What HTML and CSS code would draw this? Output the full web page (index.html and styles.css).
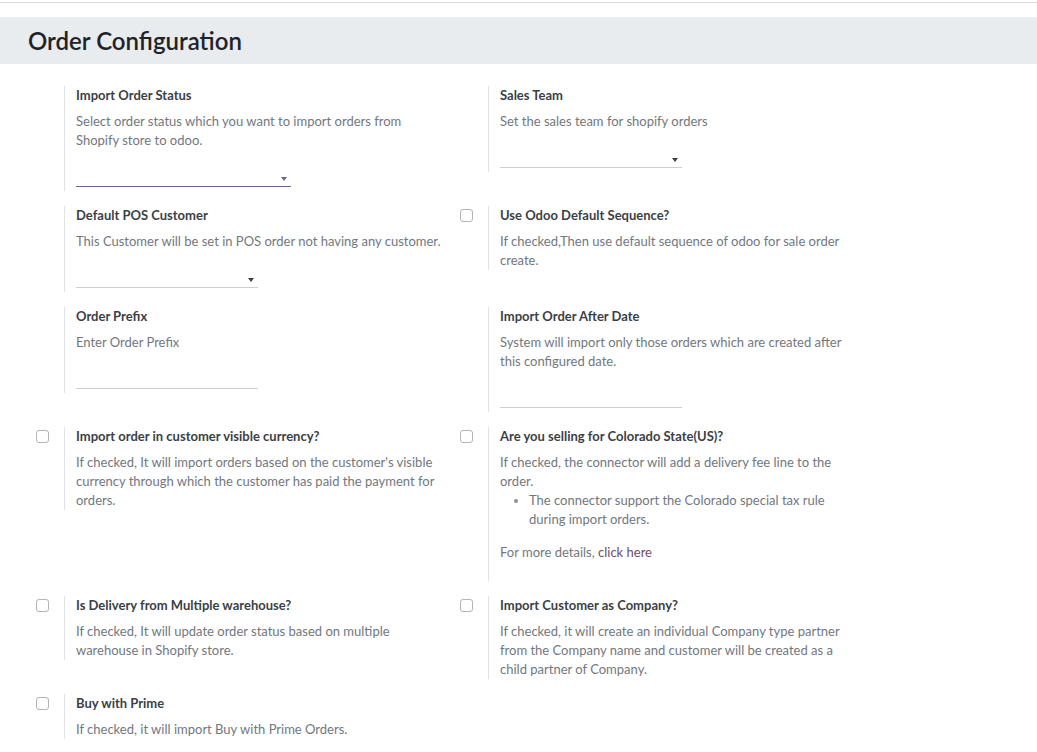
FILE: index.html
```html
<!DOCTYPE html>
<html lang="en">
<head>
<meta charset="utf-8">
<title>Order Configuration</title>
<link rel="stylesheet" href="styles.css">
</head>
<body>
<div class="topline"></div>
<h2 class="section-title">Order Configuration</h2>
<div class="settings">

  <div class="setting">
    <div class="left-pane"></div>
    <div class="right-pane">
      <div class="label">Import Order Status</div>
      <div class="desc">Select order status which you want to import orders from Shopify store to odoo.</div>
      <div class="field select focused wide"><span class="arrow"></span></div>
    </div>
  </div>

  <div class="setting">
    <div class="left-pane"></div>
    <div class="right-pane">
      <div class="label">Sales Team</div>
      <div class="desc">Set the sales team for shopify orders</div>
      <div class="field select"><span class="arrow"></span></div>
    </div>
  </div>

  <div class="setting">
    <div class="left-pane"></div>
    <div class="right-pane">
      <div class="label">Default POS Customer</div>
      <div class="desc">This Customer will be set in POS order not having any customer.</div>
      <div class="field select"><span class="arrow"></span></div>
    </div>
  </div>

  <div class="setting">
    <div class="left-pane"><span class="checkbox"></span></div>
    <div class="right-pane">
      <div class="label">Use Odoo Default Sequence?</div>
      <div class="desc">If checked,Then use default sequence of odoo for sale order create.</div>
    </div>
  </div>

  <div class="setting">
    <div class="left-pane"></div>
    <div class="right-pane">
      <div class="label">Order Prefix</div>
      <div class="desc">Enter Order Prefix</div>
      <div class="field"></div>
    </div>
  </div>

  <div class="setting">
    <div class="left-pane"></div>
    <div class="right-pane">
      <div class="label">Import Order After Date</div>
      <div class="desc">System will import only those orders which are created after this configured date.</div>
      <div class="field"></div>
    </div>
  </div>

  <div class="setting">
    <div class="left-pane"><span class="checkbox"></span></div>
    <div class="right-pane">
      <div class="label">Import order in customer visible currency?</div>
      <div class="desc">If checked, It will import orders based on the customer's visible currency through which the customer has paid the payment for orders.</div>
    </div>
  </div>

  <div class="setting">
    <div class="left-pane"><span class="checkbox"></span></div>
    <div class="right-pane extra-bottom">
      <div class="label">Are you selling for Colorado State(US)?</div>
      <div class="desc">If checked, the connector will add a delivery fee line to the order.
        <ul class="bullets">
          <li>The connector support the Colorado special tax rule during import orders.</li>
        </ul>
        <p class="more">For more details, <a href="#" class="link">click here</a></p>
      </div>
    </div>
  </div>

  <div class="setting">
    <div class="left-pane"><span class="checkbox"></span></div>
    <div class="right-pane">
      <div class="label">Is Delivery from Multiple warehouse?</div>
      <div class="desc">If checked, It will update order status based on multiple warehouse in Shopify store.</div>
    </div>
  </div>

  <div class="setting">
    <div class="left-pane"><span class="checkbox"></span></div>
    <div class="right-pane">
      <div class="label">Import Customer as Company?</div>
      <div class="desc">If checked, it will create an individual Company type partner from the Company name and customer will be created as a child partner of Company.</div>
    </div>
  </div>

  <div class="setting">
    <div class="left-pane"><span class="checkbox"></span></div>
    <div class="right-pane">
      <div class="label">Buy with Prime</div>
      <div class="desc">If checked, it will import Buy with Prime Orders.</div>
    </div>
  </div>

</div>
</body>
</html>
```

FILE: styles.css
```css
* { box-sizing: border-box; }

body {
  margin: 0;
  background: #ffffff;
  font-family: "Lato", "Noto Sans", "DejaVu Sans", sans-serif;
  font-size: 13px;
  line-height: 19px;
  color: #4a4f55;
}

.topline {
  height: 3px;
  border-bottom: 1px solid #dcd8e3;
  margin-bottom: 14px;
}

.section-title {
  margin: 0;
  height: 47px;
  background: #e9ecef;
  padding-left: 28px;
  font-size: 24px;
  font-weight: 600;
  line-height: 47px;
  color: #1f2328;
}

.settings {
  display: grid;
  grid-template-columns: 424px 424px;
  align-items: start;
  row-gap: 15px;
  margin-left: 28px;
  padding-top: 22px;
}

.setting {
  display: flex;
}

.left-pane {
  width: 36px;
  flex: none;
  padding-left: 8px;
  padding-top: 3px;
}

.checkbox {
  display: block;
  width: 13px;
  height: 13px;
  border: 1px solid #b3b3b8;
  border-radius: 3px;
  background: #fff;
}

.right-pane {
  border-left: 1px solid #dfe2e6;
  padding-left: 11px;
  width: 378px;
}

.setting:nth-child(even) .right-pane {
  width: 375px;
}

.right-pane.extra-bottom {
  padding-bottom: 19px;
}

.label {
  font-weight: 700;
  color: #3b3f45;
  margin-bottom: 7px;
}

.desc {
  color: #72777e;
}

.bullets {
  margin: 0;
  padding-left: 29px;
  padding-right: 20px;
}

.bullets li::marker {
  color: #8a8f95;
}

.more {
  margin: 14px 0 0;
}

.link {
  color: #714b67;
  text-decoration: none;
}

.field {
  position: relative;
  width: 182px;
  height: 20px;
  margin-top: 17px;
  margin-bottom: 4px;
  border-bottom: 1px solid #cfcfd3;
}

.field.wide {
  width: 215px;
}

.field.focused {
  border-bottom-color: #6f63a3;
}

.arrow {
  position: absolute;
  right: 4px;
  top: 10px;
  width: 0;
  height: 0;
  border-left: 3.5px solid transparent;
  border-right: 3.5px solid transparent;
  border-top: 4px solid #3b3f45;
}

.field.focused .arrow {
  border-top-color: #6f63a3;
}
```
